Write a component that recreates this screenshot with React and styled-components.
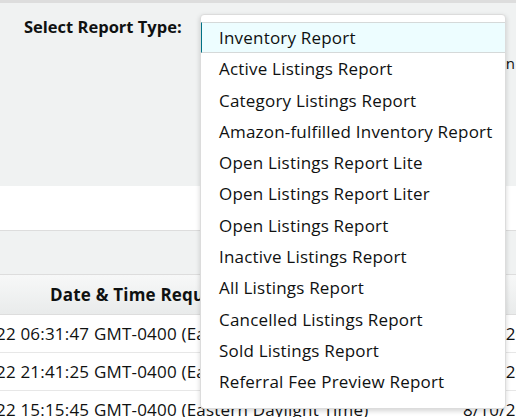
import React from "react";
import styled, { createGlobalStyle } from "styled-components";

const GlobalStyle = createGlobalStyle`
  html, body {
    margin: 0;
    padding: 0;
    background: #fff;
    overflow: hidden;
  }
  body {
    font-family: "Open Sans", "Noto Sans", "Liberation Sans", sans-serif;
    color: #0f1111;
  }
`;

const reportTypes = [
  "Inventory Report",
  "Active Listings Report",
  "Category Listings Report",
  "Amazon-fulfilled Inventory Report",
  "Open Listings Report Lite",
  "Open Listings Report Liter",
  "Open Listings Report",
  "Inactive Listings Report",
  "All Listings Report",
  "Cancelled Listings Report",
  "Sold Listings Report",
  "Referral Fee Preview Report",
];

const requests = [
  {
    requested: "8/17/2022 06:31:47 GMT-0400 (Eastern Daylight Time)",
    completed: "8/17/2022 06:32:15 GMT-0400 (Eastern Daylight Time)",
  },
  {
    requested: "8/16/2022 21:41:25 GMT-0400 (Eastern Daylight Time)",
    completed: "8/16/2022 21:42:03 GMT-0400 (Eastern Daylight Time)",
  },
  {
    requested: "8/10/2022 15:15:45 GMT-0400 (Eastern Daylight Time)",
    completed: "8/10/2022 15:16:20 GMT-0400 (Eastern Daylight Time)",
  },
];

function App() {
  return (
    <>
      <GlobalStyle />
      <Page>
        <FormPanel>
          <FieldRow>
            <Label>Select Report Type:</Label>
            <SelectField>
              <SelectTrigger>Inventory Report</SelectTrigger>
              <HelpText>Choose the report you want to run</HelpText>
              <Dropdown role="listbox">
                {reportTypes.map((name, i) => (
                  <Option key={name} $active={i === 0}>
                    {name}
                  </Option>
                ))}
              </Dropdown>
            </SelectField>
          </FieldRow>
        </FormPanel>
        <Spacer />
        <TableSection>
          <TableToolbar />
          <Viewport>
            <Table>
              <colgroup>
                <col style={{ width: 600 }} />
                <col style={{ width: 440 }} />
              </colgroup>
              <thead>
                <tr>
                  <HeadCell>Date &amp; Time Requested</HeadCell>
                  <HeadCell>Date &amp; Time Completed</HeadCell>
                </tr>
              </thead>
              <tbody>
                {requests.map((r) => (
                  <tr key={r.requested}>
                    <Cell>{r.requested}</Cell>
                    <Cell $left>{r.completed}</Cell>
                  </tr>
                ))}
              </tbody>
            </Table>
          </Viewport>
        </TableSection>
      </Page>
    </>
  );
}

export default App;

const Page = styled.div`
  width: 516px;
  height: 417px;
  overflow: hidden;
`;

const FormPanel = styled.div`
  border-top: 3px solid #dddddd;
  background: #f0f2f2;
  height: 186px;
  padding: 11px 0 0 24px;
  box-sizing: border-box;
`;

const FieldRow = styled.div`
  display: flex;
  align-items: flex-start;
`;

const Label = styled.div`
  width: 176px;
  flex: none;
  font-size: 16.5px;
  font-weight: 700;
  line-height: 24px;
  padding-top: 1px;
`;

const SelectField = styled.div`
  position: relative;
  width: 316px;
  flex: none;
`;

const SelectTrigger = styled.div`
  width: 306px;
  height: 31px;
  box-sizing: border-box;
  border: 1px solid #d5d9d9;
  border-radius: 8px;
  background: #f0f2f2;
  padding: 0 12px;
  font-size: 14px;
  line-height: 29px;
`;

const HelpText = styled.div`
  margin-top: 8px;
  padding-right: 1px;
  font-size: 15px;
  line-height: 20px;
  text-align: right;
  white-space: nowrap;
  overflow: hidden;
  color: #0f1111;
`;

const Dropdown = styled.ul`
  position: absolute;
  top: 0;
  left: 0;
  width: 306px;
  margin: 0;
  padding: 7px 0 10px;
  list-style: none;
  box-sizing: border-box;
  background: #fff;
  border: 1px solid #dcdcdc;
  border-radius: 4px;
  box-shadow: 0 2px 5px rgba(15, 17, 17, 0.18);
  z-index: 10;
`;

const Option = styled.li`
  height: 31.3px;
  box-sizing: border-box;
  padding-left: 17px;
  font-size: 17px;
  letter-spacing: 0.2px;
  line-height: 29px;
  white-space: nowrap;
  border: 1px solid ${(p) => (p.$active ? "#d5d9d9" : "transparent")};
  border-left-color: ${(p) => (p.$active ? "#007185" : "transparent")};
  border-right: none;
  background: ${(p) => (p.$active ? "#edfdff" : "transparent")};
`;

const Spacer = styled.div`
  height: 44px;
`;

const TableSection = styled.div`
  border-top: 1px solid #dddddd;
`;

const TableToolbar = styled.div`
  height: 43px;
  background: #f0f2f2;
  border-bottom: 1px solid #dddddd;
`;

const Viewport = styled.div`
  overflow: hidden;
`;

const Table = styled.table`
  margin-left: -149px;
  border-collapse: collapse;
  table-layout: fixed;
  width: 1040px;
`;

const HeadCell = styled.th`
  height: 39px;
  padding: 0 12px;
  font-size: 17px;
  letter-spacing: 0.2px;
  font-weight: 700;
  text-align: center;
  white-space: nowrap;
  background: linear-gradient(#f7f8f8, #e9ebeb);
  border-bottom: 1px solid #dddddd;
`;

const Cell = styled.td`
  height: 37px;
  padding: 0 12px;
  font-size: 17px;
  letter-spacing: 0.2px;
  text-align: ${(p) => (p.$left ? "left" : "center")};
  white-space: nowrap;
  overflow: hidden;
  border-bottom: 1px solid #e7e7e7;
`;
